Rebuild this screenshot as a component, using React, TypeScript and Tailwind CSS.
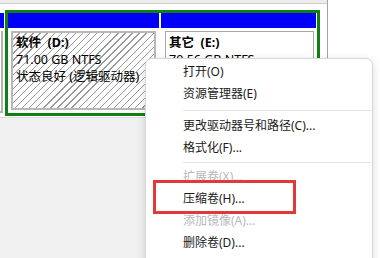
import React from "react";

type Item = { label: string; disabled?: boolean } | { sep: number };

const menuItems: Item[] = [
  { label: "打开(O)" },
  { label: "资源管理器(E)" },
  { sep: 10 },
  { label: "更改驱动器号和路径(C)..." },
  { label: "格式化(F)..." },
  { sep: 7 },
  { label: "扩展卷(X)...", disabled: true },
  { label: "压缩卷(H)..." },
  { label: "添加镜像(A)...", disabled: true },
  { label: "删除卷(D)..." },
];

const ContextMenu = () => {
  return (
    <div className="absolute left-[145px] top-[58px] w-[228px] h-[220px] bg-white border border-[#d6d6d6] rounded-t-[7px] shadow-[0_2px_8px_rgba(0,0,0,0.14)] pt-[2px] pr-[1px]">
      {menuItems.map((it, i) =>
        "sep" in it ? (
          <div
            key={i}
            className="flex items-center pl-[37px]"
            style={{ height: it.sep }}
          >
            <div className="h-px w-full bg-[#e3e3e3]" />
          </div>
        ) : (
          <div
            key={i}
            className={
              it.disabled
                ? "h-[22px] leading-[22px] pl-[37px] text-[#b9b9b9]"
                : "h-[22px] leading-[22px] pl-[37px] text-[#1b1b1b]"
            }
          >
            {it.label}
          </div>
        )
      )}
    </div>
  );
};

const App = () => {
  return (
    <div className="relative w-[380px] h-[258px] overflow-hidden bg-white text-[12px] text-black font-['Noto_Sans','Noto_Sans_CJK_SC',sans-serif]">
      <div className="flex h-full">
        <div className="w-[328px] flex flex-col border-r border-[#a3a3a3]">
          <div className="h-[4px] bg-[#ededed] border-b border-[#cdcdcd]" />
          <div className="flex items-start pt-[6px] pb-[1px] bg-white">
            {/* cut-off partition on the left */}
            <div className="w-[4px] flex flex-col pt-[3px]">
              <div className="h-[15px] bg-[#0000f8]" />
              <div className="mt-[3px] h-[82px] w-[3px] border-r-2 border-b-2 border-[#b4b4b4]" />
            </div>
            <div className="ml-[1px] w-[315px] h-[106px] border-[3px] border-[#117f11] flex gap-[2px] bg-white text-[12.5px]">
              <div className="w-[151px] flex flex-col">
                <div className="h-[15px] bg-[#0000f8]" />
                <div className="flex-1 p-[3px]">
                  <div className="h-full border-2 border-[#b8b8b8] pl-[3px] pt-[1px] leading-[17px] bg-[image:repeating-linear-gradient(135deg,#ffffff_0px,#ffffff_4px,#9a9a9a_4px,#9a9a9a_5px)]">
                    <div className="font-bold whitespace-pre">软件  (D:)</div>
                    <div>71.00 GB NTFS</div>
                    <div>状态良好 (逻辑驱动器)</div>
                  </div>
                </div>
              </div>
              <div className="flex-1 flex flex-col">
                <div className="h-[15px] bg-[#0000f8] mr-[1px]" />
                <div className="flex-1 pt-[3px] pb-[3px] pl-[4px] pr-[3px]">
                  <div className="h-full border border-[#a8a8a8] pl-[3px] pt-[2px] leading-[17px] bg-white">
                    <div className="font-bold whitespace-pre">其它  (E:)</div>
                    <div>70.56 GB NTFS</div>
                  </div>
                </div>
              </div>
            </div>
          </div>
          <div className="flex-1 bg-[#f0f0f0] border-t border-[#dcdcdc]" />
        </div>
        <div className="flex-1 bg-white" />
      </div>

      <ContextMenu />

      {/* highlight annotation */}
      <div className="absolute left-[153px] top-[180px] w-[143px] h-[34px] border-[3px] border-[#e0393b]" />
    </div>
  );
};

export default App;
